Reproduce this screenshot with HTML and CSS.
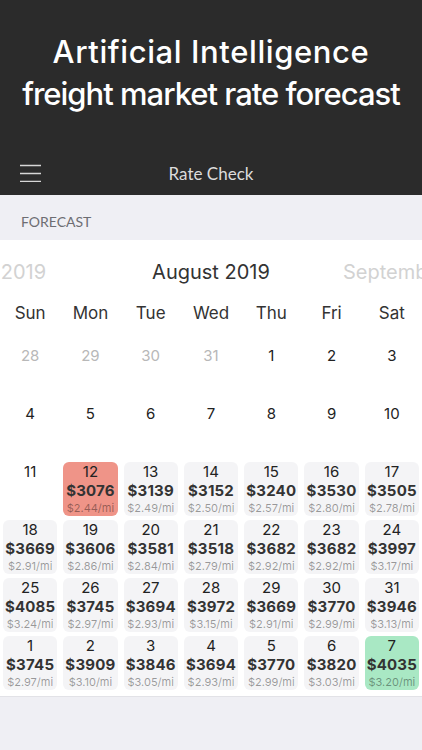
FILE: index.html
```html
<!DOCTYPE HTML>
<html>
<head>
    <meta charset="utf-8">
    <meta name="viewport" content="width=device-width, initial-scale=1">
    <link rel="stylesheet" href="styles.css">
</head>
<body>
    <header class="hero">
        <h1 class="hero-title">
            <span class="hero-line first">Artificial Intelligence</span>
            <span class="hero-line second">freight market rate forecast</span>
        </h1>
        <nav class="navbar">
            <span class="menu-icon">
                <svg width="22" height="18" viewBox="0 0 22 18">
                    <path d="M0 1.5h21M0 9.5h21M0 17.5h21" stroke="#d6d6d6" stroke-width="1.6" fill="none"/>
                </svg>
            </span>
            <span class="navbar-title">Rate Check</span>
        </nav>
    </header>

    <div class="section-head">FORECAST</div>

    <section class="calendar">
        <div class="month-row">
            <div class="month-side left"><span>July 2019</span></div>
            <div class="month-current">August 2019</div>
            <div class="month-side right"><span>September 2019</span></div>
        </div>
        <div class="weekdays">
            <span>Sun</span><span>Mon</span><span>Tue</span><span>Wed</span><span>Thu</span><span>Fri</span><span>Sat</span>
        </div>
        <div class="days" id="days"></div>
    </section>

    <script>
        var days = [
            [28, null, null, "muted"], [29, null, null, "muted"], [30, null, null, "muted"], [31, null, null, "muted"],
            [1], [2], [3],
            [4], [5], [6], [7], [8], [9], [10],
            [11], [12, 3076, "2.44", "low"], [13, 3139, "2.49"], [14, 3152, "2.50"], [15, 3240, "2.57"], [16, 3530, "2.80"], [17, 3505, "2.78"],
            [18, 3669, "2.91"], [19, 3606, "2.86"], [20, 3581, "2.84"], [21, 3518, "2.79"], [22, 3682, "2.92"], [23, 3682, "2.92"], [24, 3997, "3.17"],
            [25, 4085, "3.24"], [26, 3745, "2.97"], [27, 3694, "2.93"], [28, 3972, "3.15"], [29, 3669, "2.91"], [30, 3770, "2.99"], [31, 3946, "3.13"],
            [1, 3745, "2.97"], [2, 3909, "3.10"], [3, 3846, "3.05"], [4, 3694, "2.93"], [5, 3770, "2.99"], [6, 3820, "3.03"], [7, 4035, "3.20", "high"]
        ];

        var daysElement = document.getElementById("days");
        days.forEach(function(d) {
            var cell = document.createElement("div");
            cell.className = "day";
            if (d[1]) cell.classList.add("has-rate");
            if (d[3]) cell.classList.add(d[3]);

            var html = '<span class="day-num">' + d[0] + '</span>';
            if (d[1]) {
                html += '<span class="day-price">$' + d[1] + '</span>';
                html += '<span class="day-mile">$' + d[2] + '/mi</span>';
            }
            cell.innerHTML = html;
            daysElement.appendChild(cell);
        });
    </script>
</body>
</html>
```

FILE: styles.css
```css
body {
    font-family: Inter, Roboto, "Liberation Sans", sans-serif;
    background-color: #efeff4;
    margin: 0;
    padding: 0;
}

.hero {
    background-color: #2b2b2b;
    color: #ffffff;
    height: 195px;
    display: flex;
    flex-direction: column;
}

.hero-title {
    margin: 0;
    padding-top: 31px;
    font-size: 31px;
    font-weight: 500;
    line-height: 42px;
    text-align: center;
}

.hero-line {
    display: block;
    white-space: nowrap;
}

.hero-line.first {
    letter-spacing: 0.6px;
}

.hero-line.second {
    letter-spacing: -1px;
}

.navbar {
    margin-top: auto;
    height: 44px;
    display: flex;
    align-items: center;
    justify-content: center;
    position: relative;
}

.menu-icon {
    position: absolute;
    left: 20px;
    top: 13px;
    display: flex;
}

.navbar-title {
    font-family: Lato, "Open Sans", sans-serif;
    font-size: 17px;
    color: #dcdcdc;
}

.section-head {
    height: 45px;
    box-sizing: border-box;
    padding: 18px 21px 0;
    font-family: Lato, "Open Sans", sans-serif;
    font-size: 14px;
    color: #6d6d72;
}

.calendar {
    background-color: #ffffff;
    padding-bottom: 6px;
    border-bottom: 1px solid #e2e2e7;
}

.month-row {
    display: grid;
    grid-template-columns: minmax(0, 1fr) auto minmax(0, 1fr);
    height: 62px;
    align-items: center;
    font-size: 20px;
    white-space: nowrap;
}

.month-current {
    color: #333333;
    padding-top: 2px;
}

.month-side {
    display: flex;
    overflow: hidden;
    color: #d2d2d2;
    padding-top: 2px;
}

.month-side span {
    flex-shrink: 0;
}

.month-side.left {
    justify-content: flex-end;
    padding-right: 106px;
}

.month-side.right {
    padding-left: 73px;
}

.weekdays {
    display: grid;
    grid-template-columns: repeat(7, 1fr);
    height: 22px;
    align-items: center;
    text-align: center;
    font-size: 17px;
    color: #333333;
}

.days {
    display: grid;
    grid-template-columns: repeat(7, 1fr);
    column-gap: 6px;
    row-gap: 4px;
    padding: 0 3px;
    margin-top: 22px;
}

.day {
    height: 54px;
    border-radius: 6px;
    display: flex;
    flex-direction: column;
    align-items: center;
    color: #222222;
}

.day.has-rate {
    background-color: #f4f4f6;
}

.day.low {
    background-color: #ef9488;
}

.day.high {
    background-color: #a9e8c4;
}

.day.muted {
    color: #b8b8b8;
}

.day-num {
    font-size: 15px;
    line-height: 18px;
    margin-top: 1px;
}

.day-price {
    font-size: 15px;
    font-weight: 700;
    line-height: 20px;
    letter-spacing: 0.2px;
    color: #333333;
}

.day-mile {
    font-size: 11px;
    line-height: 14px;
    color: rgba(0, 0, 0, 0.38);
}
```
